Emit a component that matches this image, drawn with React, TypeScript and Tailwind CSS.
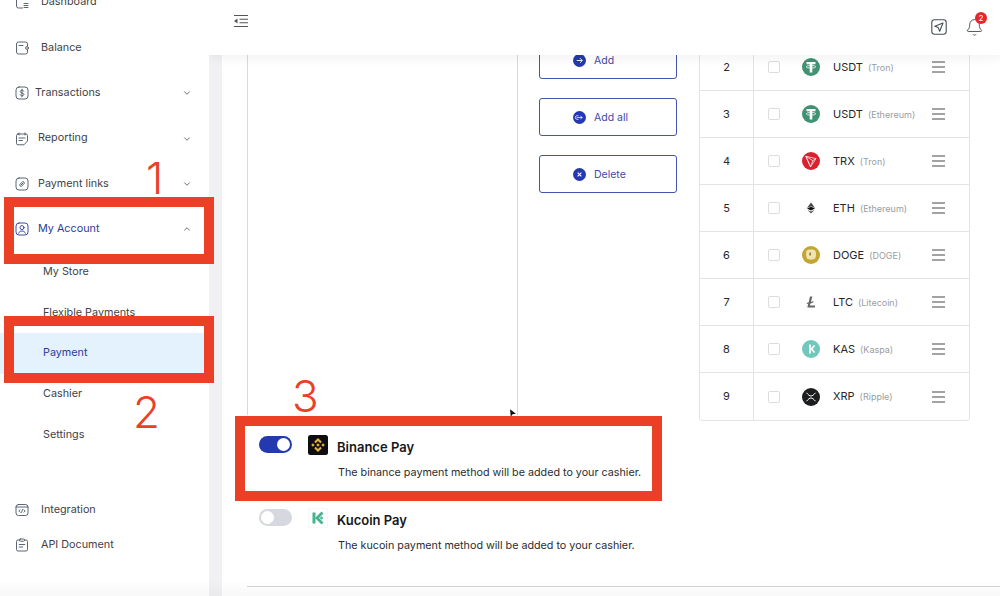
import { Bell, ChevronDown, ChevronUp } from 'lucide-react';
import type { ReactNode } from 'react';

function Ico({ children, className = 'text-[#4b5563]' }: { children: ReactNode; className?: string }) {
  return (
    <svg viewBox="0 0 14 14" fill="none" stroke="currentColor" strokeWidth="0.9" strokeLinecap="round" strokeLinejoin="round" className={`w-[14px] h-[14px] shrink-0 ${className}`}>
      {children}
    </svg>
  );
}

const DashboardIcon = () => (
  <Ico><path d="M12.5 4V3a2 2 0 0 0-2-2h-7a2 2 0 0 0-2 2v8a2 2 0 0 0 2 2h4" /><path d="M9 8.5h4M9 10.5h4M9 12.5h4" /></Ico>
);
const BalanceIcon = () => (
  <Ico><path d="M12.5 5V3a2 2 0 0 0-2-2h-7a2 2 0 0 0-2 2v8a2 2 0 0 0 2 2h7a2 2 0 0 0 2-2V9" /><circle cx="12" cy="7" r="1.4" /><path d="M4 4.5h4" /></Ico>
);
const DollarIcon = () => (
  <Ico><rect x="1" y="1" width="12" height="12" rx="3" /><path d="M8.8 5.2C8.5 4.5 7.8 4.2 7 4.2c-1 0-1.8.5-1.8 1.4 0 1.9 3.7.9 3.7 2.8 0 .9-.9 1.4-1.9 1.4-.8 0-1.6-.4-1.9-1.1M7 3.2v7.6" /></Ico>
);
const ReportIcon = () => (
  <Ico><path d="M3 2h8a1.5 1.5 0 0 1 1.5 1.5V9L9 12.8H3A1.5 1.5 0 0 1 1.5 11.3V3.5A1.5 1.5 0 0 1 3 2z" /><path d="M4 1v2M10 1v2M4 6h6M4 8.5h3.5" /></Ico>
);
const LinkIcon = () => (
  <Ico><rect x="1" y="1" width="12" height="12" rx="3" /><path d="M6 8l2-2M5.8 6.4 4.9 7.3a1.3 1.3 0 0 0 1.8 1.8l.9-.9M8.2 7.6l.9-.9a1.3 1.3 0 0 0-1.8-1.8l-.9.9" /></Ico>
);
const UserIcon = () => (
  <Ico className="text-[#2d3a9f]"><rect x="1" y="1" width="12" height="12" rx="3" /><circle cx="7" cy="5.6" r="2" /><path d="M3.6 11.2c.6-1.6 1.8-2.2 3.4-2.2s2.8.6 3.4 2.2" /></Ico>
);
const CodeIcon = () => (
  <Ico><rect x="1" y="1.5" width="12" height="11" rx="2.5" /><path d="M1 4h12M5 6.8 3.8 8 5 9.2M9 6.8 10.2 8 9 9.2M7.6 6.5 6.4 9.5" /></Ico>
);
const ClipIcon = () => (
  <Ico><path d="M4.5 2H3a1.5 1.5 0 0 0-1.5 1.5v8A1.5 1.5 0 0 0 3 13h8a1.5 1.5 0 0 0 1.5-1.5v-8A1.5 1.5 0 0 0 11 2H9.5" /><rect x="4.5" y="1" width="5" height="2.2" rx="0.8" /><path d="M4.2 6.5h5.6M4.2 9h3.4" /></Ico>
);

function NavRow({ icon, label, gap, chevron, active }: { icon: ReactNode; label: string; gap: string; chevron?: 'down' | 'up'; active?: boolean }) {
  return (
    <div className={`h-[45.4px] flex items-center pl-[15px] pr-[17px] text-[10.8px] ${active ? 'text-[#2d3a9f]' : 'text-[#3f4246]'}`}>
      {icon}
      <span className={`${gap} flex-1`}>{label}</span>
      {chevron === 'down' && <ChevronDown size={10} className="text-[#555]" />}
      {chevron === 'up' && <ChevronUp size={10} className="text-[#555]" />}
    </div>
  );
}

function SubRow({ label, active }: { label: string; active?: boolean }) {
  return (
    <div className={`h-[40.6px] flex items-center pl-[43px] text-[10.8px] ${active ? 'bg-[#e3f2fc] text-[#2d3a9f]' : 'text-[#3f4246]'}`}>
      {label}
    </div>
  );
}

function Sidebar() {
  return (
    <aside className="w-[209px] shrink-0 h-full bg-white overflow-hidden z-20 flex flex-col">
      <div className="-mt-[20.3px]">
        <NavRow icon={<DashboardIcon />} label="Dashboard" gap="ml-[12px]" />
        <NavRow icon={<BalanceIcon />} label="Balance" gap="ml-[12px]" />
        <NavRow icon={<DollarIcon />} label="Transactions" gap="ml-[6px]" chevron="down" />
        <NavRow icon={<ReportIcon />} label="Reporting" gap="ml-[9px]" chevron="down" />
        <NavRow icon={<LinkIcon />} label="Payment links" gap="ml-[9px]" chevron="down" />
        <NavRow icon={<UserIcon />} label="My Account" gap="ml-[9px]" chevron="up" active />
      </div>
      <div>
        <SubRow label="My Store" />
        <SubRow label="Flexible Payments" />
        <SubRow label="Payment" active />
        <SubRow label="Cashier" />
        <SubRow label="Settings" />
      </div>
      <div className="mt-[32.4px] flex flex-col">
        <div className="h-[35px]"><NavRow icon={<CodeIcon />} label="Integration" gap="ml-[12px]" /></div>
        <div className="h-[35px]"><NavRow icon={<ClipIcon />} label="API Document" gap="ml-[12px]" /></div>
      </div>
    </aside>
  );
}

function Header() {
  return (
    <header className="h-[55px] shrink-0 bg-white flex items-center justify-between pl-[24px] pr-[16px] z-10 shadow-[0_4px_10px_rgba(0,0,0,0.05)]">
      <svg viewBox="0 0 16 14" className="w-[16px] h-[14px] -mt-[13px] text-[#555]" fill="none" stroke="currentColor" strokeWidth="1.1">
        <path d="M1 1.5h14M6.5 5.3H15M6.5 8.7H15M1 12.5h14" />
        <path d="M4.5 4.5v5L1 7z" fill="currentColor" stroke="none" />
      </svg>
      <div className="flex items-center gap-[18px] -mt-[1px]">
        <svg viewBox="0 0 16 16" className="w-[16px] h-[16px] text-[#475055]" fill="none" stroke="currentColor" strokeWidth="1.1" strokeLinejoin="round">
          <rect x="0.8" y="0.8" width="14.4" height="14.4" rx="2.6" />
          <path d="M12 4 3.8 7.2l3.4 1.4 1.5 3.6z" />
        </svg>
        <div className="relative">
          <Bell size={19} strokeWidth={1.2} className="text-[#475055]" />
          <span className="absolute -top-[6px] left-[10px] w-[12px] h-[12px] rounded-full bg-[#e5262a] text-white text-[8px] leading-[12px] text-center">2</span>
        </div>
      </div>
    </header>
  );
}

function ActionButton({ label, glyph }: { label: string; glyph: ReactNode }) {
  return (
    <div className="w-[138px] h-[38px] rounded-[3px] border border-[#4354ae] flex items-center pl-[33px] pt-[1px] gap-[8px] text-[10.5px] text-[#3f4aa6]">
      <svg viewBox="0 0 14 14" className="w-[13px] h-[13px] -mt-[1px]">
        <circle cx="7" cy="7" r="7" fill="#2438b0" />
        {glyph}
      </svg>
      <span className="pt-[1px]">{label}</span>
    </div>
  );
}

function CoinIcon({ kind }: { kind: string }) {
  if (kind === 'usdt')
    return (
      <svg viewBox="0 0 18 18" className="w-[18px] h-[18px]">
        <circle cx="9" cy="9" r="9" fill="#3f9272" />
        <path d="M4.500 4h9v2.200H10.300V14.500H7.700V6.200H4.500z" fill="#fff" />
        <ellipse cx="9" cy="8.800" rx="4.800" ry="1.300" fill="none" stroke="#fff" strokeWidth="0.800" />
      </svg>
    );
  if (kind === 'trx')
    return (
      <svg viewBox="0 0 18 18" className="w-[18px] h-[18px]">
        <circle cx="9" cy="9" r="9" fill="#d8232f" />
        <path d="M3.800 4.300 14 6.600 8.500 14.800zM3.800 4.300 8.500 14.800M3.800 4.300 10.800 8.600 14 6.600M10.800 8.600 8.500 14.800" fill="none" stroke="#fff" strokeWidth="0.700" strokeLinejoin="round" />
      </svg>
    );
  if (kind === 'eth')
    return (
      <svg viewBox="0 0 18 18" className="w-[18px] h-[18px]">
        <path d="M9 3.500 13 9 9 7.200 5 9z" fill="#444" />
        <path d="M5 9.400 9 7.800 13 9.400 9 11.600z" fill="#111" />
        <path d="M5.500 11 9 12.600 12.500 11 9 14.500z" fill="#555" />
      </svg>
    );
  if (kind === 'doge')
    return (
      <svg viewBox="0 0 18 18" className="w-[18px] h-[18px]">
        <circle cx="9" cy="9" r="9" fill="#c2a633" />
        <path d="M4.500 5c1.500-1.800 7.500-2 9 0 .8 2 .8 5.500-.5 7.500-1.500 1.500-6.500 1.500-8 0C4 10.500 3.800 7 4.500 5z" fill="#f1e3b0" />
        <rect x="7.500" y="6.500" width="1.200" height="3" fill="#6b5a1e" />
      </svg>
    );
  if (kind === 'ltc')
    return (
      <svg viewBox="0 0 18 18" className="w-[18px] h-[18px]">
        <path d="M8 3.500h2.300L9 9l2.500-1-.3 1.400-2.700 1-.6 2.200h5.300l-.4 1.900H5.300l1-4-1.700.7.300-1.300 1.800-.7z" fill="#666" />
      </svg>
    );
  if (kind === 'kas')
    return (
      <svg viewBox="0 0 18 18" className="w-[18px] h-[18px]">
        <circle cx="9" cy="9" r="9" fill="#70c7ba" />
        <path d="M8 4.500v9M9.500 9l3-3.500M9.500 9l3 3.500" stroke="#fff" strokeWidth="1.800" fill="none" />
      </svg>
    );
  return (
    <svg viewBox="0 0 18 18" className="w-[18px] h-[18px]">
      <circle cx="9" cy="9" r="9" fill="#1b1d1f" />
      <path d="M4.500 4.800C6.500 7 7.500 8 9 8s2.500-1 4.500-3.200M4.500 13.200C6.500 11 7.500 10 9 10s2.500 1 4.500 3.200" stroke="#fff" strokeWidth="1" fill="none" />
    </svg>
  );
}

const coins = [
  { n: 2, kind: 'usdt', sym: 'USDT', net: 'Tron' },
  { n: 3, kind: 'usdt', sym: 'USDT', net: 'Ethereum' },
  { n: 4, kind: 'trx', sym: 'TRX', net: 'Tron' },
  { n: 5, kind: 'eth', sym: 'ETH', net: 'Ethereum' },
  { n: 6, kind: 'doge', sym: 'DOGE', net: 'DOGE' },
  { n: 7, kind: 'ltc', sym: 'LTC', net: 'Litecoin' },
  { n: 8, kind: 'kas', sym: 'KAS', net: 'Kaspa' },
  { n: 9, kind: 'xrp', sym: 'XRP', net: 'Ripple' },
];

function CoinTable() {
  return (
    <div className="w-[271px] border border-[#e3e4e8] rounded-b-[3px] text-[#26282b]">
      {coins.map((c, i) => (
        <div key={c.n} className={`h-[47px] flex items-center ${i < coins.length - 1 ? 'border-b border-[#e3e4e8]' : ''}`}>
          <div className="w-[54px] h-full border-r border-[#e3e4e8] flex items-center justify-center text-[11px]">{c.n}</div>
          <div className="ml-[14px] w-[12px] h-[12px] rounded-[2px] border border-[#dcdde1] bg-white" />
          <div className="ml-[22px] w-[18px] h-[18px]"><CoinIcon kind={c.kind} /></div>
          <div className="ml-[13px] flex-1 flex items-baseline gap-[5px] text-[11px] whitespace-nowrap">
            <span>{c.sym}</span>
            <span className="text-[9px] text-[#9a9ca0]">({c.net})</span>
          </div>
          <div className="mr-[24px] flex flex-col gap-[3px]">
            <div className="w-[13px] h-[2px] bg-[#a3a3a3]" />
            <div className="w-[13px] h-[2px] bg-[#a3a3a3]" />
            <div className="w-[13px] h-[2px] bg-[#a3a3a3]" />
          </div>
        </div>
      ))}
    </div>
  );
}

function PayRow({ name, text, on, logo }: { name: string; text: string; on?: boolean; logo: ReactNode }) {
  return (
    <div className="h-[73px] flex items-start pl-[12px] pt-[12px] text-[#17181a]">
      <div className={`w-[33px] h-[17px] rounded-full -mt-[1px] flex items-center px-[2px] ${on ? 'bg-[#2438b0] justify-end' : 'bg-[#d5d8de] justify-start'}`}>
        <div className="w-[13px] h-[13px] rounded-full bg-white" />
      </div>
      <div className="ml-[16px] w-[20px] h-[20px] -mt-[2px]">{logo}</div>
      <div className="ml-[9px]">
        <div className="text-[13px] leading-[20px] font-semibold">{name}</div>
        <div className="mt-[9px] ml-[1px] text-[10.74px] leading-[14px] text-[#2a2c2f] whitespace-nowrap">{text}</div>
      </div>
    </div>
  );
}

function BinanceLogo() {
  return (
    <svg viewBox="0 0 20 20" className="w-[20px] h-[20px]">
      <rect width="20" height="20" rx="2.500" fill="#0e0e10" />
      <g fill="#e0b03c">
        <path d="M10 3 13.800 6.800 12.300 8.300 10 6 7.700 8.300 6.200 6.800z" />
        <path d="M10 17 13.800 13.200 12.300 11.700 10 14 7.700 11.700 6.200 13.200z" />
        <path d="M3.200 10 4.900 8.300 6.600 10 4.900 11.700zM13.400 10 15.100 8.300 16.800 10 15.100 11.700zM8.200 10 10 8.200 11.800 10 10 11.800z" />
      </g>
    </svg>
  );
}

function KucoinLogo() {
  return (
    <svg viewBox="0 0 20 20" className="w-[20px] h-[20px]">
      <rect x="0.300" y="0.300" width="19.400" height="19.400" rx="2.500" fill="#fff" stroke="#eceef0" strokeWidth="0.600" />
      <path d="M6 4.500v11" fill="none" stroke="#44b58f" strokeWidth="3" />
      <path d="M14.500 4.500 9 10l5.500 5.500" fill="none" stroke="#44b58f" strokeWidth="2.800" />
      <path d="M13.500 8.300 15.200 10l-1.700 1.700L11.800 10z" fill="#44b58f" />
    </svg>
  );
}

function Annotations() {
  return (
    <>
      <div className="absolute left-[4px] top-[197px] w-[210px] h-[67px] border-[10px] border-[#ec4026] z-30" />
      <div className="absolute left-[4px] top-[316px] w-[210px] h-[67px] border-[10px] border-[#ec4026] z-30" />
      <div className="absolute left-[235px] top-[416px] w-[427px] h-[85px] border-[10px] border-[#ec4026] z-30" />
      <div className="absolute left-[146px] top-[152px] text-[44px] leading-[52px] font-light text-[#ec4026] z-30">1</div>
      <div className="absolute left-[133px] top-[386px] text-[44px] leading-[52px] font-light text-[#ec4026] z-30">2</div>
      <div className="absolute left-[292px] top-[370px] text-[44px] leading-[52px] font-light text-[#ec4026] z-30">3</div>
      {/* faint fade along the bottom edge of the capture */}
      <div className="absolute left-0 right-0 bottom-0 h-[16px] bg-gradient-to-b from-transparent to-black/[0.03] z-30" />
    </>
  );
}

export default function App() {
  return (
    <div className="relative w-[1000px] h-[596px] overflow-hidden bg-white flex font-['Inter',sans-serif]">
      <Sidebar />
      <div className="flex-1 flex flex-col h-full min-w-0">
        <Header />
        <div className="flex-1 flex min-h-0">
          <div className="w-[13px] shrink-0 bg-[#f1f1f3]" />
          <div className="flex-1 pl-[25px] flex flex-col min-w-0 overflow-hidden">
            <div className="flex items-start -mt-[12px]">
              <div className="relative w-[271px] h-[372px] border-x border-[#d8d9dc] shrink-0">
                <svg viewBox="0 0 8 10" className="absolute right-[1px] bottom-[-2px] w-[6px] h-[8px]"><path d="M0 0 8 6 3.500 6.500 1 10z" fill="#111" /></svg>
              </div>
              <div className="ml-[21px] flex flex-col gap-[19px] shrink-0 -mt-[2px]">
                <ActionButton label="Add" glyph={<path d="M4 7h6M7.500 4.500 10 7 7.500 9.500" stroke="#fff" strokeWidth="1" fill="none" />} />
                <ActionButton label="Add all" glyph={<path d="M4 7h6M8 5.500 10 7 8 8.500M6 5H4.500a2 2 0 0 0 0 4H6" stroke="#fff" strokeWidth="0.800" fill="none" />} />
                <ActionButton label="Delete" glyph={<path d="M5 5l4 4M9 5l-4 4" stroke="#fff" strokeWidth="1.200" />} />
              </div>
              <div className="ml-[22px] shrink-0"><CoinTable /></div>
            </div>
            <div className="mt-[4px] flex flex-col">
              <PayRow name="Binance Pay" text="The binance payment method will be added to your cashier." on logo={<BinanceLogo />} />
              <PayRow name="Kucoin Pay" text="The kucoin payment method will be added to your cashier." logo={<KucoinLogo />} />
            </div>
            <div className="mt-[15px] border-t border-[#d4d5d8]" />
          </div>
        </div>
      </div>
      <Annotations />
    </div>
  );
}
